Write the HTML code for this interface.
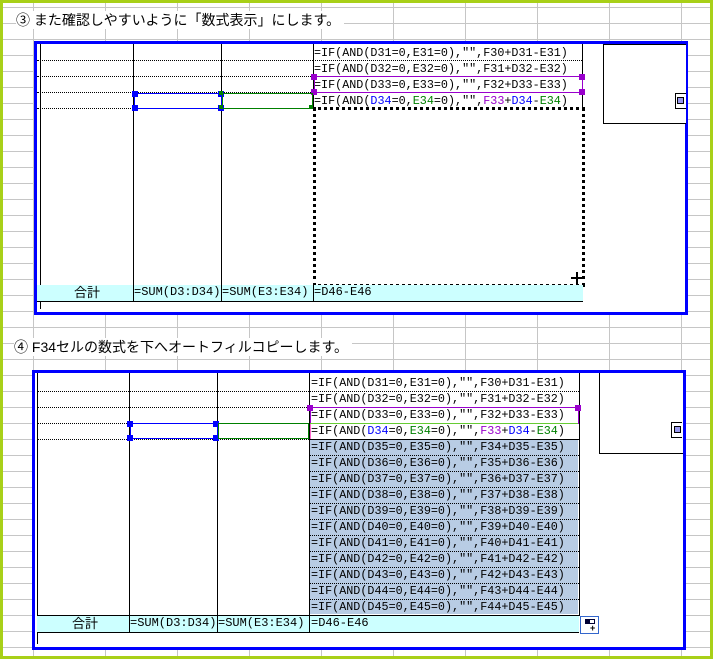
<!DOCTYPE html>
<html><head><meta charset="utf-8"><style>
body{margin:0;width:713px;height:659px;position:relative;overflow:hidden;background:#fff;font-family:"Liberation Sans","Noto Sans CJK JP",sans-serif}
.a{position:absolute}
.grid{position:absolute;left:0;top:0;width:713px;height:659px;
background-image:linear-gradient(to right,#c6c6c6 1px,transparent 1px),linear-gradient(to bottom,#c6c6c6 1px,transparent 1px);
background-size:72px 16px,72px 16px;background-position:33px 0,0 7px}
.f{position:absolute;font-family:"Liberation Mono",monospace;font-size:11.75px;line-height:16px;white-space:pre;color:#000;letter-spacing:0}
.g{position:absolute;font-family:"Liberation Mono",monospace;font-size:12px;line-height:17px;white-space:pre;color:#000}
.dot{position:absolute;height:0;border-top:1px dotted #000}
.vl{position:absolute;width:1px;background:#000}
.h{position:absolute;width:6px;height:6px}
.tt{position:absolute;font-size:14px;font-family:"Liberation Sans","Noto Sans CJK JP",sans-serif;white-space:nowrap;background:#fff;line-height:18px}
</style></head><body>
<div class="grid"></div>
<div class="a" style="left:0;top:0;width:713px;height:3px;background:#a8d018"></div>
<div class="a" style="left:0;top:0;width:3px;height:659px;background:#a8d018"></div>
<div class="a" style="left:710px;top:0;width:3px;height:659px;background:#a8d018"></div>
<div class="a" style="left:0;top:656px;width:713px;height:3px;background:#a8d018"></div>

<div class="tt" style="left:16px;top:11px;padding-right:4px">③ また確認しやすいように「数式表示」にします。</div>
<div class="tt" style="left:14px;top:338px;padding-right:4px">④ F34セルの数式を下へオートフィルコピーします。</div>

<!-- UPPER -->
<div class="a" style="left:34px;top:41px;width:648px;height:268px;border:3px solid #0000ff;background:#fff"></div>
<div class="a" style="left:603px;top:44px;width:82px;height:78px;border:1px solid #000;border-right:none;background:#fff"></div>
<div class="a" style="left:675px;top:93px;width:10px;height:14px;border:1px solid #000;border-right:none;background:#fff"></div>
<div class="a" style="left:677px;top:97px;width:5px;height:5px;border:1px solid #000;background:#9999ee"></div>
<div class="vl" style="left:40px;top:44px;height:265px"></div>
<div class="vl" style="left:133px;top:44px;height:257px"></div>
<div class="vl" style="left:221px;top:44px;height:257px"></div>
<div class="vl" style="left:313px;top:44px;height:64px"></div>
<div class="vl" style="left:582px;top:44px;height:64px"></div>
<div class="dot" style="left:37px;top:60px;width:276px"></div>
<div class="dot" style="left:37px;top:76px;width:276px"></div>
<div class="dot" style="left:37px;top:92px;width:276px"></div>
<div class="dot" style="left:37px;top:108px;width:276px"></div>
<div class="dot" style="left:313px;top:60px;width:269px"></div>
<div class="dot" style="left:313px;top:76px;width:269px"></div>
<div class="f" style="left:314px;top:45px">=IF(AND(D31=0,E31=0),"",F30+D31-E31)</div>
<div class="f" style="left:314px;top:61px">=IF(AND(D32=0,E32=0),"",F31+D32-E32)</div>
<div class="f" style="left:314px;top:77px">=IF(AND(D33=0,E33=0),"",F32+D33-E33)</div>
<div class="f" style="left:314px;top:93px">=IF(AND(<span style="color:#0000ff">D34</span>=0,<span style="color:#008000">E34</span>=0),"",<span style="color:#9900cc">F33</span>+<span style="color:#0000ff">D34</span>-<span style="color:#008000">E34</span>)</div>
<div class="a" style="left:314px;top:76px;width:267px;height:15px;border:1px solid #9900cc"></div>
<div class="h" style="left:311px;top:74px;background:#9900cc"></div>
<div class="h" style="left:579px;top:74px;background:#9900cc"></div>
<div class="h" style="left:311px;top:89px;background:#9900cc"></div>
<div class="h" style="left:579px;top:89px;background:#9900cc"></div>
<div class="a" style="left:134px;top:93px;width:86px;height:14px;border:1px solid #0000ff"></div>
<div class="h" style="left:132px;top:91px;background:#0000ff"></div>
<div class="h" style="left:218px;top:91px;background:#0000ff"></div>
<div class="h" style="left:132px;top:105px;background:#0000ff"></div>
<div class="h" style="left:218px;top:105px;background:#0000ff"></div>
<div class="a" style="left:222px;top:93px;width:89px;height:14px;border:1px solid #008000"></div>
<div class="h" style="left:219px;top:91px;background:#008000;width:4px;height:4px"></div>
<div class="h" style="left:219px;top:105px;background:#008000;width:4px;height:4px"></div>
<div class="h" style="left:309px;top:105px;background:#008000;width:4px;height:4px"></div>
<div class="a" style="left:313px;top:107px;width:266px;height:174px;border:3px dotted #000"></div>
<div class="a" style="left:571px;top:277px;width:13px;height:2px;background:#000"></div>
<div class="a" style="left:576px;top:272px;width:2px;height:12px;background:#000"></div>
<div class="a" style="left:37px;top:285px;width:546px;height:16px;background:#ccffff;border-bottom:1px solid #000"></div>
<div class="vl" style="left:133px;top:285px;height:16px"></div>
<div class="vl" style="left:221px;top:285px;height:16px"></div>
<div class="vl" style="left:313px;top:285px;height:16px"></div>
<div class="a" style="left:74px;top:285px;font-size:13px;line-height:16px">合計</div>
<div class="g" style="left:134px;top:284px">=SUM(D3:D34)</div>
<div class="g" style="left:222px;top:284px">=SUM(E3:E34)</div>
<div class="g" style="left:314px;top:284px">=D46-E46</div>

<!-- LOWER -->
<div class="a" style="left:32px;top:370px;width:648px;height:274px;border:3px solid #0000ff;background:#fff"></div>
<div class="a" style="left:599px;top:373px;width:83px;height:80px;border-left:1px solid #000;border-bottom:1px solid #000;background:#fff"></div>
<div class="a" style="left:671px;top:422px;width:10px;height:14px;border:1px solid #000;border-right:none;background:#fff"></div>
<div class="a" style="left:674px;top:426px;width:5px;height:5px;border:1px solid #000;background:#9999ee"></div>
<div class="a" style="left:310px;top:440px;width:268px;height:174px;background:#b8cce4"></div>
<div class="vl" style="left:37px;top:373px;height:271px"></div>
<div class="vl" style="left:129px;top:373px;height:258px"></div>
<div class="vl" style="left:217px;top:373px;height:258px"></div>
<div class="vl" style="left:309px;top:373px;height:242px"></div>
<div class="vl" style="left:579px;top:373px;height:242px"></div>
<div class="dot" style="left:37px;top:391px;width:272px"></div>
<div class="dot" style="left:37px;top:407px;width:272px"></div>
<div class="dot" style="left:37px;top:423px;width:272px"></div>
<div class="dot" style="left:37px;top:439px;width:272px"></div>
<div class="dot" style="left:309px;top:391px;width:270px"></div>
<div class="dot" style="left:309px;top:455px;width:270px"></div>
<div class="dot" style="left:309px;top:471px;width:270px"></div>
<div class="dot" style="left:309px;top:487px;width:270px"></div>
<div class="dot" style="left:309px;top:503px;width:270px"></div>
<div class="dot" style="left:309px;top:519px;width:270px"></div>
<div class="dot" style="left:309px;top:535px;width:270px"></div>
<div class="dot" style="left:309px;top:551px;width:270px"></div>
<div class="dot" style="left:309px;top:567px;width:270px"></div>
<div class="dot" style="left:309px;top:583px;width:270px"></div>
<div class="dot" style="left:309px;top:599px;width:270px"></div>
<div class="f" style="left:311px;top:375px">=IF(AND(D31=0,E31=0),"",F30+D31-E31)</div>
<div class="f" style="left:311px;top:391px">=IF(AND(D32=0,E32=0),"",F31+D32-E32)</div>
<div class="f" style="left:311px;top:407px">=IF(AND(D33=0,E33=0),"",F32+D33-E33)</div>
<div class="f" style="left:311px;top:423px">=IF(AND(<span style="color:#0000ff">D34</span>=0,<span style="color:#008000">E34</span>=0),"",<span style="color:#9900cc">F33</span>+<span style="color:#0000ff">D34</span>-<span style="color:#008000">E34</span>)</div>
<div class="f" style="left:311px;top:439px">=IF(AND(D35=0,E35=0),"",F34+D35-E35)</div>
<div class="f" style="left:311px;top:455px">=IF(AND(D36=0,E36=0),"",F35+D36-E36)</div>
<div class="f" style="left:311px;top:471px">=IF(AND(D37=0,E37=0),"",F36+D37-E37)</div>
<div class="f" style="left:311px;top:487px">=IF(AND(D38=0,E38=0),"",F37+D38-E38)</div>
<div class="f" style="left:311px;top:503px">=IF(AND(D39=0,E39=0),"",F38+D39-E39)</div>
<div class="f" style="left:311px;top:519px">=IF(AND(D40=0,E40=0),"",F39+D40-E40)</div>
<div class="f" style="left:311px;top:535px">=IF(AND(D41=0,E41=0),"",F40+D41-E41)</div>
<div class="f" style="left:311px;top:551px">=IF(AND(D42=0,E42=0),"",F41+D42-E42)</div>
<div class="f" style="left:311px;top:567px">=IF(AND(D43=0,E43=0),"",F42+D43-E43)</div>
<div class="f" style="left:311px;top:583px">=IF(AND(D44=0,E44=0),"",F43+D44-E44)</div>
<div class="f" style="left:311px;top:599px">=IF(AND(D45=0,E45=0),"",F44+D45-E45)</div>
<div class="a" style="left:310px;top:407px;width:267px;height:15px;border:1px solid #9900cc"></div>
<div class="h" style="left:307px;top:405px;background:#9900cc"></div>
<div class="h" style="left:575px;top:405px;background:#9900cc"></div>
<div class="a" style="left:310px;top:423px;width:268px;height:1px;background:#66cc33"></div>
<div class="a" style="left:310px;top:424px;width:1px;height:15px;background:#ff66cc"></div>
<div class="a" style="left:130px;top:423px;width:86px;height:14px;border:1px solid #0000ff"></div>
<div class="h" style="left:127px;top:421px;background:#0000ff"></div>
<div class="h" style="left:213px;top:421px;background:#0000ff"></div>
<div class="h" style="left:127px;top:435px;background:#0000ff"></div>
<div class="h" style="left:213px;top:435px;background:#0000ff"></div>
<div class="a" style="left:218px;top:423px;width:89px;height:14px;border:1px solid #008000"></div>
<div class="a" style="left:309px;top:439px;width:269px;height:175px;border:1px solid #000"></div>
<div class="a" style="left:37px;top:615px;width:542px;height:16px;background:#ccffff;border-top:1px solid #000;border-bottom:1px solid #000"></div>
<div class="vl" style="left:129px;top:615px;height:17px"></div>
<div class="vl" style="left:217px;top:615px;height:17px"></div>
<div class="vl" style="left:309px;top:615px;height:17px"></div>
<div class="a" style="left:72px;top:615px;font-size:13px;line-height:17px">合計</div>
<div class="g" style="left:130px;top:615px">=SUM(D3:D34)</div>
<div class="g" style="left:218px;top:615px">=SUM(E3:E34)</div>
<div class="g" style="left:311px;top:615px">=D46-E46</div>
<div class="a" style="left:580px;top:616px;width:17px;height:16px;border:1px solid #3366cc;background:#fff"></div>
<div class="a" style="left:585px;top:619px;width:5px;height:5px;background:#000033"></div>
<div class="a" style="left:585px;top:619px;width:10px;height:5px;border:1px solid #000033;box-sizing:border-box"></div>
<div class="a" style="left:590px;top:624px;font-size:9px;line-height:8px;font-weight:bold">+</div>
</body></html>
